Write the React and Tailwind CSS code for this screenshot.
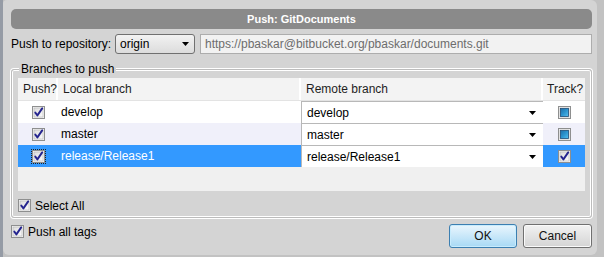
import React from 'react';

function CheckBox({ checked = true, focus = false, mixed = false }) {
  return (
    <span
      className={`inline-flex h-[13px] w-[13px] shrink-0 ${focus ? 'outline outline-1 outline-dotted outline-[#222]' : ''}`}
    >
      <svg width="13" height="13" viewBox="0 0 13 13">
        <defs>
          <linearGradient id="cbInner" x1="0" y1="0" x2="1" y2="1">
            <stop offset="0" stopColor="#dcdcdc" />
            <stop offset="1" stopColor="#fbfbfb" />
          </linearGradient>
          <linearGradient id="cbMixed" x1="0" y1="0" x2="1" y2="1">
            <stop offset="0" stopColor="#1f6fa8" />
            <stop offset="0.5" stopColor="#2c94cf" />
            <stop offset="1" stopColor="#56c0ef" />
          </linearGradient>
        </defs>
        <rect x="0.5" y="0.5" width="12" height="12" fill="#f4f4f4" stroke="#8e8f8f" />
        <rect x="2" y="2" width="9" height="9" fill="url(#cbInner)" stroke="#b4b4b4" strokeWidth="0.6" />
        {mixed && <rect x="2.5" y="2.5" width="8" height="8" fill="url(#cbMixed)" stroke="#1d4f7a" strokeWidth="0.8" />}
        {checked && !mixed && (
          <path d="M3.3 6.6 L5.4 9.4 L10.2 2.4" fill="none" stroke="#25258f" strokeWidth="1.9" strokeLinecap="round" strokeLinejoin="round" />
        )}
      </svg>
    </span>
  );
}

function Arrow() {
  return (
    <svg width="7" height="4" viewBox="0 0 7 4" className="shrink-0">
      <path d="M0 0 H7 L3.5 4 Z" fill="#000" />
    </svg>
  );
}

const rows = [
  { name: 'develop', bg: 'bg-white', track: 'mixed' },
  { name: 'master', bg: 'bg-[#f0f0fa]', track: 'mixed' },
  { name: 'release/Release1', bg: 'bg-[#3399ff]', track: 'checked', selected: true },
];

export default function App() {
  return (
    <div className="flex h-[257px] w-[604px] overflow-hidden bg-[#c2c2c2] font-['Liberation_Sans',sans-serif] text-[12px] text-black">
      <div className="w-[3px] bg-[#959ba5]" />
      <div className="flex h-[255px] w-[594px] flex-col rounded-[6px] rounded-tl-[4px] bg-[#d4d4d4] pl-[8px] pr-[5px] pt-[9px]">
        <div className="flex h-[20px] items-center justify-center rounded-[5px] bg-[#8a8a8a] text-[11px] font-bold text-white">
          Push: GitDocuments
        </div>

        <div className="mt-[5px] flex h-[20px] items-center">
          <span className="w-[104px]">Push to repository:</span>
          <div className="flex h-[20px] w-[80px] items-center justify-between rounded-[3px] border border-[#707070] bg-gradient-to-b from-[#f2f2f2] to-[#dcdcdc] pl-[4px] pr-[5px]">
            <span>origin</span>
            <Arrow />
          </div>
          <div className="ml-[5px] flex h-[20px] flex-1 items-center border border-[#adadad] bg-[#f2f2f2] pl-[4px] text-[#6d6d6d]">
            https://pbaskar@bitbucket.org/pbaskar/documents.git
          </div>
        </div>

        <div className="relative mt-[15px] rounded-[3px] border border-[#bcbcbc] px-[6px] pb-[5px] pt-[8px] shadow-[0_0_0_1px_#fff,inset_0_0_0_1px_#fff]">
          <span className="absolute -top-[8px] left-[7px] bg-[#d4d4d4] px-[2px] leading-[15px]">Branches to push</span>

          <div className="flex h-[113px] flex-col bg-[#f0f0f0]">
            <div className="flex h-[23px] items-center border-b border-[#e3e3e3] bg-[#f3f3f3] text-[#1e1e1e]">
              <div className="flex h-full w-[40px] items-center border-r-2 border-white pl-[5px]">Push?</div>
              <div className="flex h-full w-[243px] items-center border-r-2 border-white pl-[5px]">Local branch</div>
              <div className="flex h-full w-[242px] items-center border-r-2 border-white pl-[5px]">Remote branch</div>
              <div className="flex h-full flex-1 items-center pl-[4px]">Track?</div>
            </div>
            {rows.map((r) => (
              <div key={r.name} className={`flex h-[22px] items-center ${r.bg}`}>
                <div className="flex w-[40px] justify-center">
                  <CheckBox focus={r.selected} />
                </div>
                <div className={`w-[243px] pl-[3px] ${r.selected ? 'text-white' : ''}`}>{r.name}</div>
                <div className="flex h-[22px] w-[242px] items-center justify-between border-l border-t border-[#b8b8b8] bg-white pl-[5px] pr-[7px]">
                  <span>{r.name}</span>
                  <Arrow />
                </div>
                <div className="flex flex-1 justify-center">
                  <CheckBox mixed={r.track === 'mixed'} />
                </div>
              </div>
            ))}
          </div>

          <div className="mt-[8px] flex h-[13px] items-center gap-[4px]">
            <CheckBox />
            <span>Select All</span>
          </div>
        </div>

        <div className="mt-[6px] flex items-start justify-between">
          <div className="mt-[1px] flex h-[13px] items-center gap-[4px]">
            <CheckBox />
            <span>Push all tags</span>
          </div>
          <div className="flex gap-[6px]">
            <button
              type="button"
              className="h-[24px] w-[68px] rounded-[3px] border border-[#3c7fb1] bg-gradient-to-b from-[#eaf6fd] to-[#a7d9f5] text-[#111] shadow-[inset_0_0_0_1px_#c8ecfd]"
            >
              OK
            </button>
            <button
              type="button"
              className="h-[24px] w-[69px] rounded-[3px] border border-[#707070] bg-gradient-to-b from-[#f2f2f2] to-[#d4d4d4] text-[#111] shadow-[inset_0_0_0_1px_#fafafa]"
            >
              Cancel
            </button>
          </div>
        </div>
      </div>
    </div>
  );
}
